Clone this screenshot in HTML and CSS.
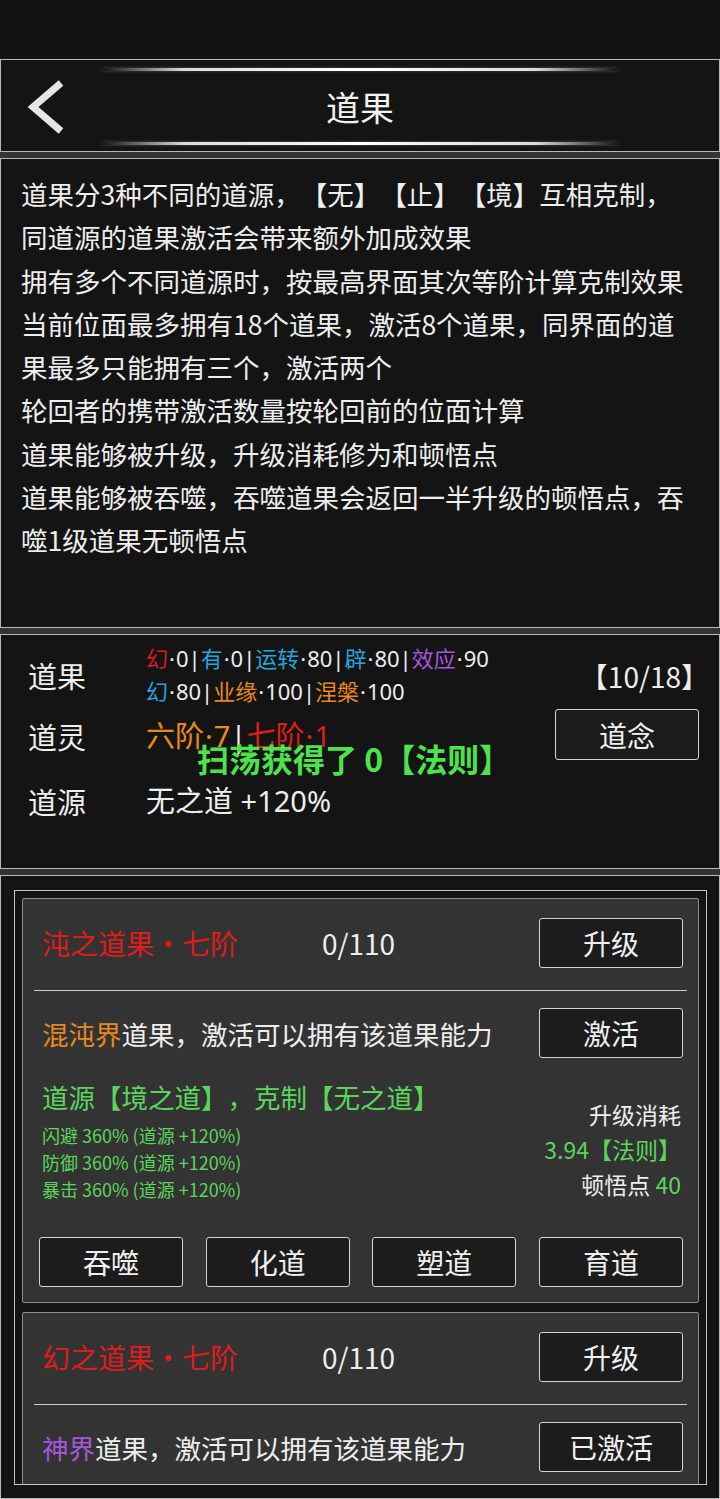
FILE: index.html
```html
<!DOCTYPE html>
<html lang="zh-CN">
<head>
    <meta charset="UTF-8">
    <meta name="viewport" content="width=device-width, initial-scale=1.0">
    <title>道果</title>
    <link rel="stylesheet" href="styles.css">
</head>
<body>
    <div class="statusbar"></div>

    <div class="page">
        <header class="panel topbar">
            <div class="glow"></div>
            <div class="topbar-row">
                <a class="back" href="#">
                    <svg width="40" height="56" viewBox="0 0 40 56">
                        <polyline points="35,4 7,28 35,52" fill="none" stroke="#e6e6e6" stroke-width="7"/>
                    </svg>
                </a>
                <h1>道果</h1>
                <span></span>
            </div>
            <div class="glow"></div>
        </header>

        <section class="panel intro">
            <div>道果分3种不同的道源，【无】【止】【境】互相克制，</div>
            <div>同道源的道果激活会带来额外加成效果</div>
            <div>拥有多个不同道源时，按最高界面其次等阶计算克制效果</div>
            <div>当前位面最多拥有18个道果，激活8个道果，同界面的道<br>果最多只能拥有三个，激活两个</div>
            <div>轮回者的携带激活数量按轮回前的位面计算</div>
            <div>道果能够被升级，升级消耗修为和顿悟点</div>
            <div>道果能够被吞噬，吞噬道果会返回一半升级的顿悟点，吞<br>噬1级道果无顿悟点</div>
        </section>

        <section class="panel summary">
            <div class="summary-list">
                <div class="sum-row">
                    <span class="sum-label">道果</span>
                    <div class="sum-small">
                        <div><span class="c-red">幻</span><i class="dot">·</i>0|<span class="c-blue">有</span><i class="dot">·</i>0|<span class="c-blue">运转</span><i class="dot">·</i>80|<span class="c-blue">辟</span><i class="dot">·</i>80|<span class="c-purple">效应</span><i class="dot">·</i>90</div>
                        <div><span class="c-blue">幻</span><i class="dot">·</i>80|<span class="c-orange">业缘</span><i class="dot">·</i>100|<span class="c-orange">涅槃</span><i class="dot">·</i>100</div>
                    </div>
                </div>
                <div class="sum-row second">
                    <span class="sum-label">道灵</span>
                    <span class="sum-value"><span class="c-orange">六阶<i class="dot">·</i>7</span>|<span class="c-red">七阶<i class="dot">·</i>1</span></span>
                </div>
                <div class="sum-row third">
                    <span class="sum-label">道源</span>
                    <span class="sum-value">无之道 +120%</span>
                </div>
            </div>
            <div class="summary-side">
                <div class="count">【10/18】</div>
                <button class="btn">道念</button>
            </div>
            <div class="toast">扫荡获得了 0【法则】</div>
        </section>

        <section class="panel list">
            <div class="list-frame">
                <div class="fruit-card">
                    <div class="card-row head">
                        <span class="card-title c-red">沌之道果·七阶</span>
                        <span class="card-progress">0/110</span>
                        <button class="btn">升级</button>
                    </div>
                    <div class="rule"></div>
                    <div class="card-row activate">
                        <span class="card-desc"><span class="c-orange">混沌界</span>道果，激活可以拥有该道果能力</span>
                        <button class="btn">激活</button>
                    </div>
                    <div class="card-body">
                        <div class="card-effects">
                            <div class="source">道源【境之道】，克制【无之道】</div>
                            <div class="buffs">
                                <div>闪避 360% (道源 +120%)</div>
                                <div>防御 360% (道源 +120%)</div>
                                <div>暴击 360% (道源 +120%)</div>
                            </div>
                        </div>
                        <div class="cost">
                            <div>升级消耗</div>
                            <div class="c-green">3.94【法则】</div>
                            <div>顿悟点 <span class="c-green">40</span></div>
                        </div>
                    </div>
                    <div class="card-actions">
                        <button class="btn">吞噬</button>
                        <button class="btn">化道</button>
                        <button class="btn">塑道</button>
                        <button class="btn">育道</button>
                    </div>
                </div>

                <div class="fruit-card clipped">
                    <div class="card-row head">
                        <span class="card-title c-red">幻之道果·七阶</span>
                        <span class="card-progress">0/110</span>
                        <button class="btn">升级</button>
                    </div>
                    <div class="rule"></div>
                    <div class="card-row activate">
                        <span class="card-desc"><span class="c-purple">神界</span>道果，激活可以拥有该道果能力</span>
                        <button class="btn">已激活</button>
                    </div>
                </div>
            </div>
        </section>
    </div>
</body>
</html>
```

FILE: styles.css
```css
:root {
    --panel-bg: #141414;
    --band: #343434;
    --line: #b8b8b8;
    --red: #df1c1c;
    --blue: #29a3dc;
    --orange: #e8891e;
    --purple: #a656df;
    --green: #5bd65b;
}

* {
    box-sizing: border-box;
}

body {
    margin: 0;
    background: #121212;
    color: #eeeeee;
    font-family: "Noto Sans CJK SC", "Noto Sans", sans-serif;
    text-spacing-trim: space-all;
    height: 1499px;
    overflow: hidden;
}

.statusbar {
    height: 59px;
    background: #121212;
}

.page {
    display: flex;
    flex-direction: column;
    gap: 6px;
    background: var(--band);
}

.panel {
    background: var(--panel-bg);
    border: 1px solid var(--line);
}

/* top bar */
.topbar {
    height: 93px;
    display: flex;
    flex-direction: column;
    padding: 8px 0 6px;
}

.glow {
    width: 516px;
    height: 3px;
    margin: 0 auto;
    background: linear-gradient(90deg, rgba(255,255,255,0), rgba(255,255,255,0.85) 16%, #ffffff 50%, rgba(255,255,255,0.85) 84%, rgba(255,255,255,0));
    box-shadow: 0 0 3px rgba(255, 255, 255, 0.25);
}

.topbar-row {
    flex: 1;
    display: grid;
    grid-template-columns: 1fr auto 1fr;
    align-items: center;
}

.back {
    display: flex;
    padding-left: 25px;
}

.topbar h1 {
    margin: 0;
    font-size: 34px;
    font-weight: 400;
    color: #f2f2f2;
}

/* intro */
.intro {
    height: 470px;
    padding: 13px 20px;
    font-size: 26.5px;
    line-height: 43.3px;
    color: #eeeeee;
}

/* summary */
.summary {
    position: relative;
    height: 235px;
    display: flex;
    justify-content: space-between;
    padding: 7px 20px 0 27px;
}

.sum-row {
    display: grid;
    grid-template-columns: 118px auto;
    align-items: center;
}

.sum-row.second {
    margin-top: 8px;
}

.sum-row.third {
    margin-top: 25px;
}

.sum-label {
    font-size: 29px;
    line-height: 40px;
}

/* latin first so the middle dot stays narrow */
.sum-small,
.sum-value {
    font-family: "Noto Sans", "Noto Sans CJK SC", sans-serif;
}

.dot {
    font-style: normal;
    margin: 0 1px;
}

.sum-small {
    font-size: 22px;
    line-height: 33px;
}

.sum-value {
    font-size: 29px;
    line-height: 40px;
}

.summary-side {
    width: 144px;
    display: flex;
    flex-direction: column;
    align-items: flex-end;
}

.count {
    margin-top: 14px;
    margin-right: -10px;
    font-size: 28px;
    line-height: 40px;
}

.summary-side .btn {
    margin-top: 13px;
    height: 51px;
}

.toast {
    position: absolute;
    left: 196px;
    top: 101px;
    font-size: 32px;
    line-height: 44px;
    font-weight: 600;
    color: #4ee24e;
}

/* list */
.list {
    height: 624px;
    padding: 14px 12px 0 13px;
}

.list-frame {
    height: 595px;
    overflow: hidden;
    border: 1px solid #c4c4c4;
    padding: 7px 7px 0 7px;
}

.fruit-card {
    background: #333333;
    border: 1px solid #8e8e8e;
    border-radius: 2px;
    padding: 0 11px 15px;
}

.fruit-card + .fruit-card {
    margin-top: 9px;
}

.fruit-card.clipped {
    min-height: 260px;
}

.card-row {
    display: flex;
    align-items: center;
    justify-content: space-between;
    padding: 0 4px 0 8px;
}

.card-row.head {
    padding-top: 19px;
}

.card-row.activate {
    margin-top: 17px;
}

.card-title {
    width: 280px;
    font-size: 28px;
}

.card-progress {
    flex: 1;
    font-size: 28px;
}

.card-desc {
    font-size: 26.5px;
}

.rule {
    height: 1px;
    margin-top: 22px;
    background: #cccccc;
}

.card-body {
    display: flex;
    justify-content: space-between;
    padding: 0 6px 0 8px;
}

.card-effects {
    margin-top: 21px;
    color: var(--green);
}

.source {
    font-size: 26.5px;
    line-height: 36px;
}

.buffs {
    margin-top: 7px;
    font-size: 18px;
    line-height: 27px;
}

.cost {
    margin-top: 39px;
    text-align: right;
    font-size: 23px;
    line-height: 35px;
}

.card-actions {
    display: grid;
    grid-template-columns: repeat(4, 144px);
    justify-content: space-between;
    margin-top: 34px;
    padding: 0 4px 0 5px;
}

.btn {
    width: 144px;
    height: 50px;
    display: flex;
    align-items: center;
    justify-content: center;
    padding: 0;
    background: #1c1c1c;
    border: 1px solid #d4d4d4;
    border-radius: 3px;
    color: #f0f0f0;
    font-family: inherit;
    font-size: 28px;
}

.c-red { color: var(--red); }
.c-blue { color: var(--blue); }
.c-orange { color: var(--orange); }
.c-purple { color: var(--purple); }
.c-green { color: var(--green); }
```
